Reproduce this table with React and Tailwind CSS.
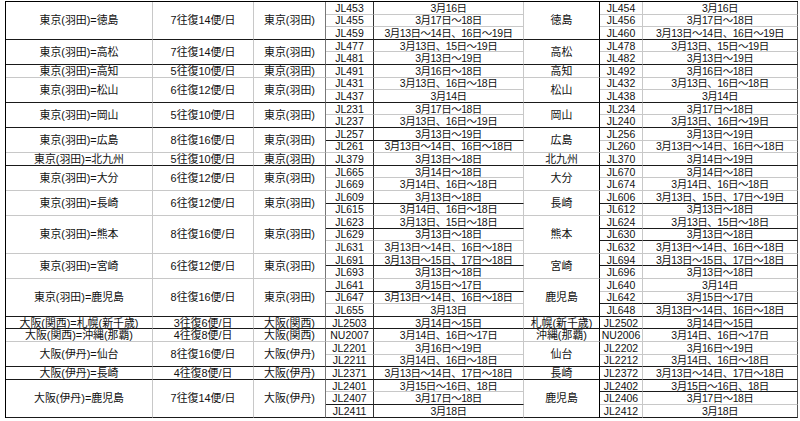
import React from "react";

// 運航便一覧（東京・大阪発着）
// rows: [往路便, 往路日, 復路便, 復路日, 往路下線黒, 復路下線黒]
const groups = [
  { route: "東京(羽田)=徳島", freq: "7往復14便/日", from: "東京(羽田)", to: "徳島", edge: "k", rows: [
    ["JL453", "3月16日", "JL454", "3月16日"],
    ["JL455", "3月17日～18日", "JL456", "3月17日～18日"],
    ["JL459", "3月13日～14日、16日～19日", "JL460", "3月13日～14日、16日～19日"],
  ] },
  { route: "東京(羽田)=高松", freq: "7往復14便/日", from: "東京(羽田)", to: "高松", edge: "k", rows: [
    ["JL477", "3月13日、15日～19日", "JL478", "3月13日、15日～19日"],
    ["JL481", "3月13日～19日", "JL482", "3月13日～19日"],
  ] },
  { route: "東京(羽田)=高知", freq: "5往復10便/日", from: "東京(羽田)", to: "高知", edge: "g", rows: [
    ["JL491", "3月16日～18日", "JL492", "3月16日～18日"],
  ] },
  { route: "東京(羽田)=松山", freq: "6往復12便/日", from: "東京(羽田)", to: "松山", edge: "k", rows: [
    ["JL431", "3月13日、16日～18日", "JL432", "3月13日、16日～18日"],
    ["JL437", "3月14日", "JL438", "3月14日"],
  ] },
  { route: "東京(羽田)=岡山", freq: "5往復10便/日", from: "東京(羽田)", to: "岡山", edge: "k", rows: [
    ["JL231", "3月17日～18日", "JL234", "3月17日～18日"],
    ["JL237", "3月13日、16日～19日", "JL240", "3月13日、16日～19日"],
  ] },
  { route: "東京(羽田)=広島", freq: "8往復16便/日", from: "東京(羽田)", to: "広島", edge: "g", rows: [
    ["JL257", "3月13日～19日", "JL256", "3月13日～19日", true, false],
    ["JL261", "3月13日～14日、16日～18日", "JL260", "3月13日～14日、16日～18日"],
  ] },
  { route: "東京(羽田)=北九州", freq: "5往復10便/日", from: "東京(羽田)", to: "北九州", edge: "k", rows: [
    ["JL379", "3月13日～18日", "JL370", "3月14日～19日"],
  ] },
  { route: "東京(羽田)=大分", freq: "6往復12便/日", from: "東京(羽田)", to: "大分", edge: "g", rows: [
    ["JL665", "3月14日～18日", "JL670", "3月14日～18日"],
    ["JL669", "3月14日、16日～18日", "JL674", "3月14日、16日～18日"],
  ] },
  { route: "東京(羽田)=長崎", freq: "6往復12便/日", from: "東京(羽田)", to: "長崎", edge: "g", rows: [
    ["JL609", "3月13日～18日", "JL606", "3月13日、15日、17日～19日", true, true],
    ["JL615", "3月14日、16日～18日", "JL612", "3月13日～18日"],
  ] },
  { route: "東京(羽田)=熊本", freq: "8往復16便/日", from: "東京(羽田)", to: "熊本", edge: "g", rows: [
    ["JL623", "3月13日、15日～18日", "JL624", "3月13日、15日～18日", true, true],
    ["JL629", "3月13日～18日", "JL630", "3月13日～18日", false, true],
    ["JL631", "3月13日～14日、16日～18日", "JL632", "3月13日～14日、16日～18日"],
  ] },
  { route: "東京(羽田)=宮崎", freq: "6往復12便/日", from: "東京(羽田)", to: "宮崎", edge: "g", rows: [
    ["JL691", "3月13日～15日、17日～18日", "JL694", "3月13日～15日、17日～18日", true, true],
    ["JL693", "3月13日～18日", "JL696", "3月13日～18日"],
  ] },
  { route: "東京(羽田)=鹿児島", freq: "8往復16便/日", from: "東京(羽田)", to: "鹿児島", edge: "k", rows: [
    ["JL641", "3月15日～17日", "JL640", "3月14日", true, false],
    ["JL647", "3月13日～14日、16日～18日", "JL642", "3月15日～17日", false, true],
    ["JL655", "3月13日", "JL648", "3月13日～14日、16日～18日"],
  ] },
  { route: "大阪(関西)=札幌(新千歳)", freq: "3往復6便/日", from: "大阪(関西)", to: "札幌(新千歳)", edge: "k", rows: [
    ["JL2503", "3月14日～15日", "JL2502", "3月14日～15日"],
  ] },
  { route: "大阪(関西)=沖縄(那覇)", freq: "4往復8便/日", from: "大阪(関西)", to: "沖縄(那覇)", edge: "g", rows: [
    ["NU2007", "3月14日、16日～17日", "NU2006", "3月14日、16日～17日"],
  ] },
  { route: "大阪(伊丹)=仙台", freq: "8往復16便/日", from: "大阪(伊丹)", to: "仙台", edge: "k", rows: [
    ["JL2201", "3月16日～19日", "JL2202", "3月16日～19日"],
    ["JL2211", "3月14日、16日～18日", "JL2212", "3月14日、16日～18日"],
  ] },
  { route: "大阪(伊丹)=長崎", freq: "4往復8便/日", from: "大阪(伊丹)", to: "長崎", edge: "k", rows: [
    ["JL2371", "3月13日～14日、17日～18日", "JL2372", "3月13日～14日、17日～18日"],
  ] },
  { route: "大阪(伊丹)=鹿児島", freq: "7往復14便/日", from: "大阪(伊丹)", to: "鹿児島", edge: "k", rows: [
    ["JL2401", "3月15日～16日、18日", "JL2402", "3月15日～16日、18日", false, true],
    ["JL2407", "3月17日～18日", "JL2406", "3月17日～18日", true, false],
    ["JL2411", "3月18日", "JL2412", "3月18日"],
  ] },
];

const spans = { 1: "row-span-1", 2: "row-span-2", 3: "row-span-3" };
const BLACK = "border-b-[#1a1a1a]";
const GRAY = "border-b-[#c8c8c8]";

const App = () => {
  return (
    <div className="w-[800px] h-[421px] bg-white pl-[5px] pt-px text-[#111] text-[10.5px] leading-[12px] font-['Liberation_Sans','Noto_Sans_CJK_JP',sans-serif]">
      <div className="grid w-[793px] grid-cols-[147px_101px_72px_48px_150px_76px_43px_155px] grid-rows-[repeat(33,12.6px)] border-l border-t border-black">
        {groups.map((g, gi) => {
          const n = g.rows.length;
          const last = gi === groups.length - 1;
          const edge = last || g.edge === "k" ? BLACK : GRAY;
          return g.rows.map((r, ri) => {
            const isEnd = ri === n - 1;
            const lb = isEnd ? edge : r[4] ? BLACK : GRAY;
            const rb = isEnd ? edge : r[5] ? BLACK : GRAY;
            return (
              <React.Fragment key={gi + "-" + ri}>
                {ri === 0 && (
                  <>
                    <div className={`${spans[n]} flex items-center justify-center whitespace-nowrap text-[10.9px] border-b border-r border-r-[#c8c8c8] ${edge}`}>
                      {g.route}
                    </div>
                    <div className={`${spans[n]} flex items-center justify-center text-[10.9px] border-b border-r border-r-[#c8c8c8] ${edge}`}>
                      {g.freq}
                    </div>
                    <div className={`${spans[n]} flex items-center justify-center text-[10.9px] border-b border-r border-r-[#777] ${edge}`}>
                      {g.from}
                    </div>
                  </>
                )}
                <div className={`flex items-center justify-center border-b border-r border-r-[#333] ${lb}`}>
                  {r[0]}
                </div>
                <div className={`flex items-center justify-center whitespace-nowrap tracking-[-0.5px] border-b border-r border-r-[#c8c8c8] ${lb}`}>
                  {r[1]}
                </div>
                {ri === 0 && (
                  <div className={`${spans[n]} flex items-center justify-center whitespace-nowrap text-[10.9px] border-b border-r border-r-black ${edge}`}>
                    {g.to}
                  </div>
                )}
                <div className={`flex items-center justify-center border-b border-r border-r-[#c8c8c8] ${rb}`}>
                  {r[2]}
                </div>
                <div className={`flex items-center justify-center whitespace-nowrap tracking-[-0.5px] border-b border-r border-r-[#555] ${rb}`}>
                  {r[3]}
                </div>
              </React.Fragment>
            );
          });
        })}
      </div>
    </div>
  );
};

export default App;
